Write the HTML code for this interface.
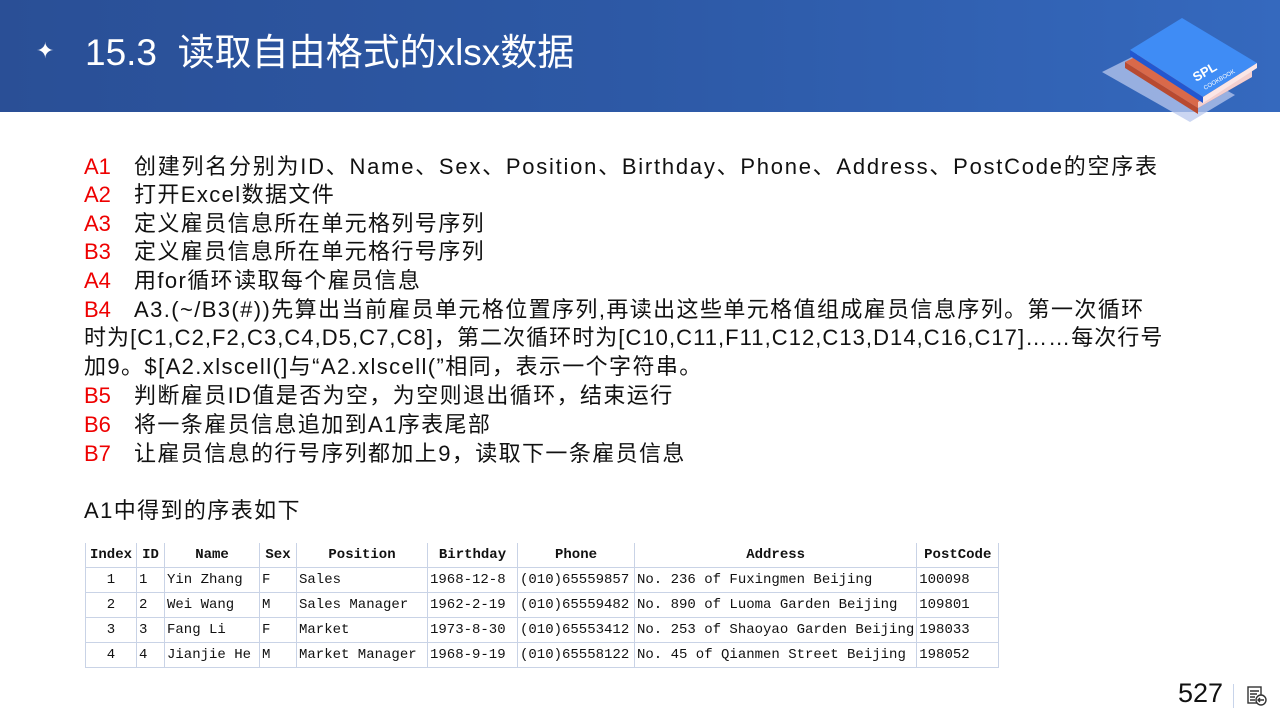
<!DOCTYPE html>
<html><head><meta charset="utf-8"><style>
body{margin:0;width:1280px;height:720px;overflow:hidden;background:#fff;font-family:"Liberation Sans","Noto Sans CJK SC",sans-serif;position:relative}
.hdr{position:absolute;left:0;top:0;width:1280px;height:112px;background:linear-gradient(90deg,#2a4f96 0%,#2d59a6 50%,#3569be 100%)}
.title{position:absolute;left:85px;top:30px;color:#fff;font-size:37px;line-height:46px;white-space:nowrap;letter-spacing:0}
.star{position:absolute;left:36px;top:38px;color:#fff;font-size:22px}
.l{position:absolute;left:84px;font-size:22px;line-height:28px;white-space:nowrap;color:#111;letter-spacing:1.4px}
.l b{font-weight:normal;color:#e00;display:inline-block;width:50px;letter-spacing:0}
table{position:absolute;left:85px;top:543px;border-collapse:collapse;font-family:"Liberation Mono","Noto Sans CJK SC",monospace;font-size:14px;color:#111}
td,th{border:1px solid #c9d3e6;height:24px;padding:0 2px;white-space:nowrap;text-align:left}
th{font-weight:bold;text-align:center;border-top:none}
td.c{text-align:center}
</style></head><body>
<div class="hdr"></div>
<div class="star">✦</div>
<div class="title">15.3&nbsp; 读取自由格式的xlsx数据</div>
<svg style="position:absolute;left:0;top:0" width="1280" height="130" viewBox="0 0 1280 130">
<polygon points="1102,72 1150,48 1235,95 1190,122" fill="#b9c8ee" opacity="0.75"/>
<polygon points="1125,62 1180,35 1252,77 1198,108" fill="#d9694a"/>
<polygon points="1125,62 1198,108 1198,114 1125,68" fill="#b84a30"/>
<polygon points="1198,102 1252,71 1252,77 1198,108" fill="#f3d0d0"/>
<polygon points="1130,50 1182,18 1257,63 1203,97" fill="#3f8cf5"/>
<polygon points="1130,50 1203,97 1203,103 1130,56" fill="#2257d0"/>
<polygon points="1203,97 1257,63 1257,68 1203,103" fill="#fbe6e6"/>
<text x="1196" y="82" fill="#fff" font-size="13" font-weight="bold" font-family="Liberation Sans" transform="rotate(-30 1196 82)">SPL</text>
<text x="1205" y="90" fill="#fff" font-size="6" font-family="Liberation Sans" transform="rotate(-30 1205 90)">COOKBOOK</text>
</svg>
<div class="l" style="top:153px;letter-spacing:1.75px"><b>A1</b>创建列名分别为ID、Name、Sex、Position、Birthday、Phone、Address、PostCode的空序表</div>
<div class="l" style="top:181px"><b>A2</b>打开Excel数据文件</div>
<div class="l" style="top:210px"><b>A3</b>定义雇员信息所在单元格列号序列</div>
<div class="l" style="top:238px"><b>B3</b>定义雇员信息所在单元格行号序列</div>
<div class="l" style="top:267px"><b>A4</b>用for循环读取每个雇员信息</div>
<div class="l" style="top:296px"><b>B4</b>A3.(~/B3(#))先算出当前雇员单元格位置序列,再读出这些单元格值组成雇员信息序列。第一次循环</div>
<div class="l" style="top:324px;letter-spacing:1.05px">时为[C1,C2,F2,C3,C4,D5,C7,C8]，第二次循环时为[C10,C11,F11,C12,C13,D14,C16,C17]……每次行号</div>
<div class="l" style="top:353px">加9。$[A2.xlscell(]与“A2.xlscell(”相同，表示一个字符串。</div>
<div class="l" style="top:382px"><b>B5</b>判断雇员ID值是否为空，为空则退出循环，结束运行</div>
<div class="l" style="top:411px"><b>B6</b>将一条雇员信息追加到A1序表尾部</div>
<div class="l" style="top:440px"><b>B7</b>让雇员信息的行号序列都加上9，读取下一条雇员信息</div>
<div class="l" style="top:497px">A1中得到的序表如下</div>
<table>
<tr><th style="width:46px">Index</th><th style="width:23px">ID</th><th style="width:90px">Name</th><th style="width:32px">Sex</th><th style="width:126px">Position</th><th style="width:85px">Birthday</th><th style="width:112px">Phone</th><th style="width:272px">Address</th><th style="width:77px">PostCode</th></tr>
<tr><td class="c">1</td><td>1</td><td>Yin Zhang</td><td>F</td><td>Sales</td><td>1968-12-8</td><td>(010)65559857</td><td>No. 236 of Fuxingmen Beijing</td><td>100098</td></tr>
<tr><td class="c">2</td><td>2</td><td>Wei Wang</td><td>M</td><td>Sales Manager</td><td>1962-2-19</td><td>(010)65559482</td><td>No. 890 of Luoma Garden Beijing</td><td>109801</td></tr>
<tr><td class="c">3</td><td>3</td><td>Fang Li</td><td>F</td><td>Market</td><td>1973-8-30</td><td>(010)65553412</td><td>No. 253 of Shaoyao Garden Beijing</td><td>198033</td></tr>
<tr><td class="c">4</td><td>4</td><td>Jianjie He</td><td>M</td><td>Market Manager</td><td>1968-9-19</td><td>(010)65558122</td><td>No. 45 of Qianmen Street Beijing</td><td>198052</td></tr>
</table>
<div style="position:absolute;left:1178px;top:678px;font-size:27px;color:#111">527</div>
<div style="position:absolute;left:1233px;top:684px;width:1px;height:24px;background:#c8d4ea"></div>
<svg style="position:absolute;left:1246px;top:685px" width="22" height="22" viewBox="0 0 22 22" fill="none" stroke="#333" stroke-width="1.4"><rect x="2" y="2" width="13" height="16"/><path d="M4 6h9M4 9h7M4 12h5M4 15h5"/><circle cx="15" cy="15" r="5" fill="#fff"/><path d="M18 15h-6M14 13l-2 2 2 2"/></svg>
</body></html>
